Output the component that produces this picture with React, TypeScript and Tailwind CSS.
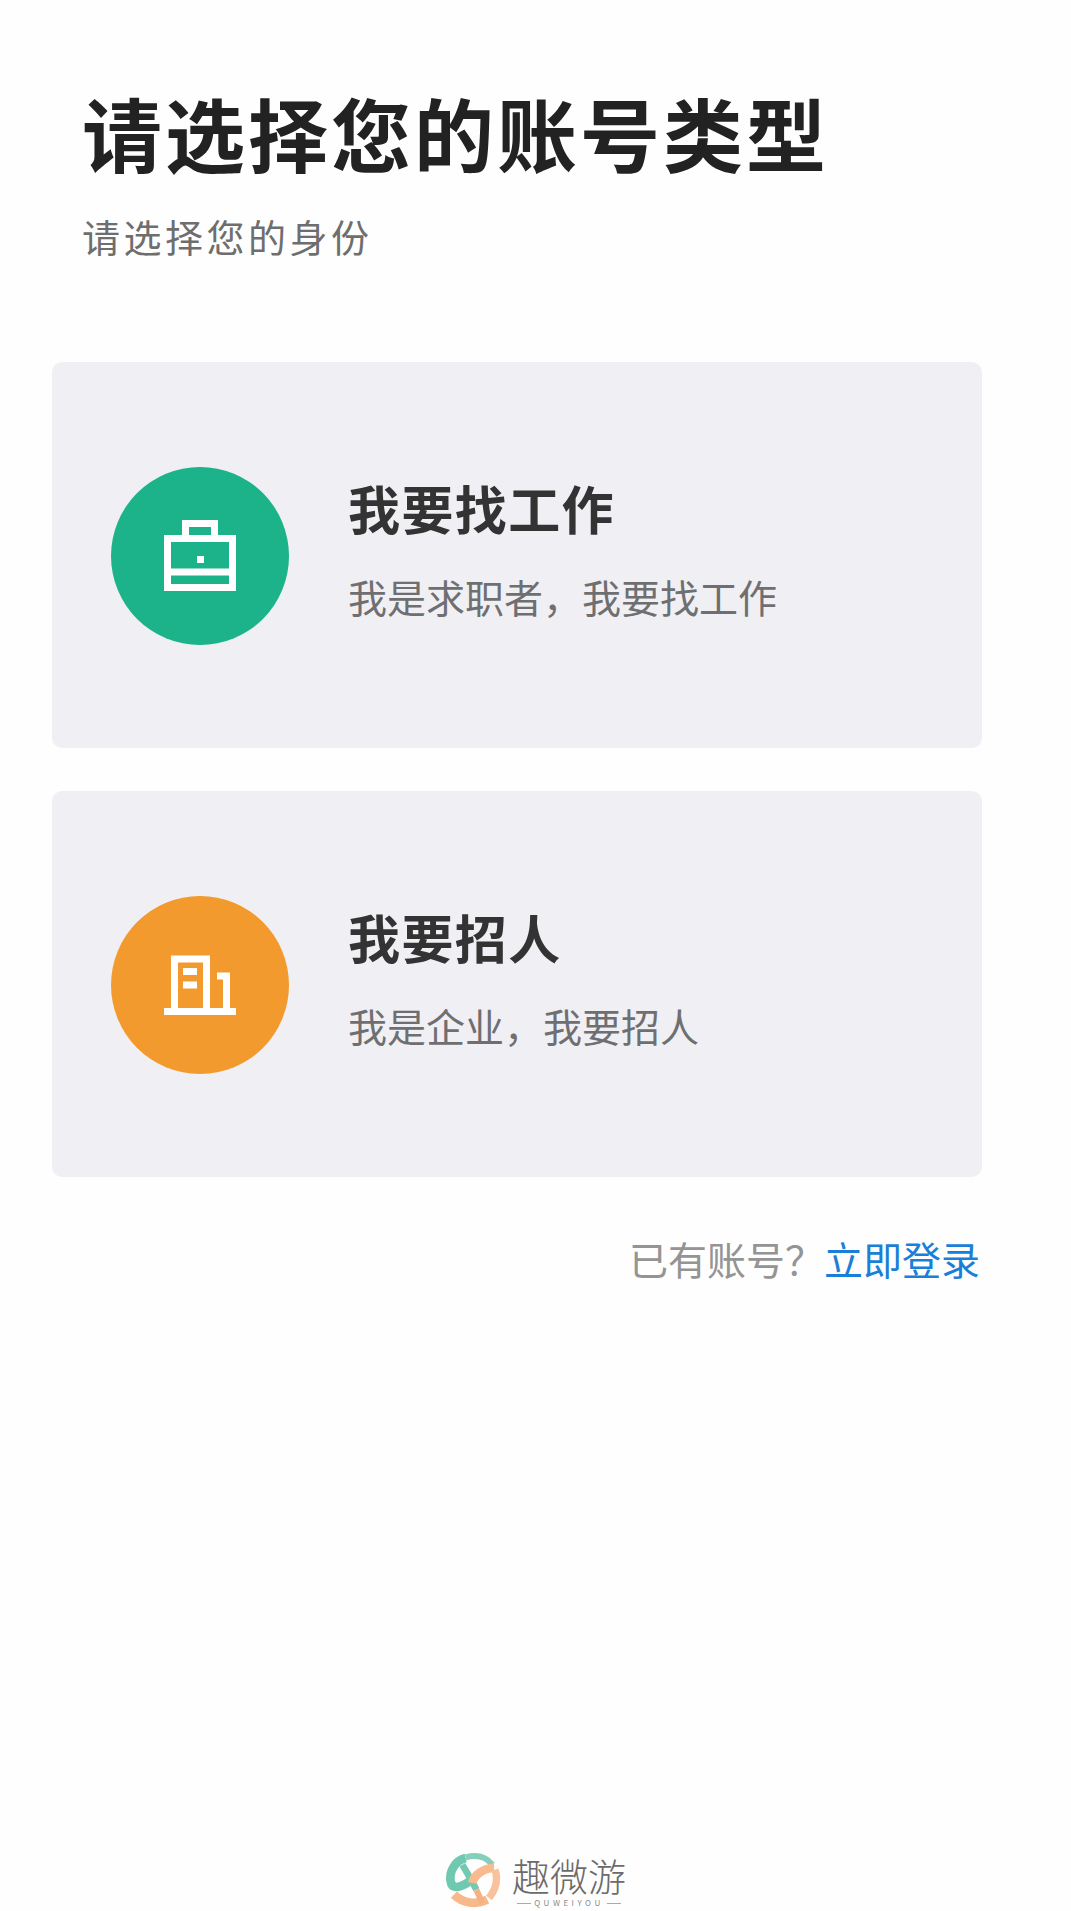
const cjk = "font-['Noto_Sans_CJK_SC','Noto_Sans',sans-serif]"

function BriefcaseIcon() {
  return (
    <svg width="72" height="72" viewBox="0 0 72 72" fill="none" stroke="#fff" strokeWidth="7">
      <path d="M21.500 18V3.500H50.500V18" />
      <rect x="3.500" y="18.500" width="65" height="49" />
      <path d="M3.500 52H68.500" />
      <rect x="33" y="36" width="7" height="7" fill="#fff" stroke="none" />
    </svg>
  )
}

function BuildingIcon() {
  return (
    <svg width="72" height="72" viewBox="0 0 72 72" fill="none" stroke="#fff" strokeWidth="7">
      <path d="M0 62.500H72" />
      <path d="M10.500 62V10H42.500V62" />
      <path d="M19 22.500H33M19 36H33" />
      <path d="M53 27H62.500V62" />
    </svg>
  )
}

// woven ring logo, traced by eye from the reference
function LogoMark() {
  return (
    <svg width="62" height="60" viewBox="0 0 186 180" fill="none">
      <path d="M80 30C48 38 30 70 35 100C38 125 62 120 92 100" stroke="#6fc8b0" strokeWidth="26" />
      <path d="M80 28C110 20 140 25 160 50" stroke="#86d0bb" strokeWidth="18" />
      <path d="M70 50C85 75 100 100 112 125" stroke="#74c9b2" strokeWidth="20" />
      <path d="M100 105C105 80 135 60 165 60" stroke="#f7bb8f" strokeWidth="26" />
      <path d="M168 65C178 95 170 125 150 150" stroke="#f8c39c" strokeWidth="22" />
      <path d="M45 140C70 165 110 172 145 155" stroke="#f7b98c" strokeWidth="26" />
      <path d="M112 125L130 165" stroke="#f5b083" strokeWidth="18" />
    </svg>
  )
}

function RoleCard({
  title,
  desc,
  color,
  icon,
}: {
  title: string
  desc: string
  color: string
  icon: React.ReactNode
}) {
  return (
    <div className="flex h-[386px] items-center rounded-[10px] bg-[#f0f0f4] pl-[59px]">
      <div className={`mt-[2px] flex h-[178px] w-[178px] shrink-0 items-center justify-center rounded-full ${color}`}>
        {icon}
      </div>
      <div className="ml-[59px] flex flex-col pb-[13px]">
        <div className="text-[52px] leading-[64px] font-bold tracking-[1.4px] text-[#333333]">{title}</div>
        <div className="mt-[31px] text-[39px] leading-[50px] text-[#6f6f72]">{desc}</div>
      </div>
    </div>
  )
}

export default function App() {
  return (
    <div className={`${cjk} flex min-h-[1911px] flex-col bg-[#fefefe]`}>
      <div className="pt-[76px] pl-[82px]">
        <h1 className="text-[80px] leading-[110px] font-bold tracking-[3px] text-[#222222]">请选择您的账号类型</h1>
        <p className="mt-[25px] text-[38px] leading-[50px] tracking-[3.500px] text-[#6e6e6e]">请选择您的身份</p>
      </div>

      <div className="mt-[101px] ml-[52px] flex w-[930px] flex-col gap-[43px] self-start">
        <RoleCard
          title="我要找工作"
          desc={"我是求职者\uFF0C我要找工作"}
          color="bg-[#1cb28a]"
          icon={<BriefcaseIcon />}
        />
        <RoleCard
          title="我要招人"
          desc={"我是企业\uFF0C我要招人"}
          color="bg-[#f29a2e]"
          icon={<BuildingIcon />}
        />
      </div>

      <div className="mt-[56px] ml-[52px] w-[928px] text-right text-[39px] leading-[50px] text-[#949494]">
        {"已有账号\uFF1F"}<span className="text-[#1a7fd8]">立即登录</span>
      </div>

      <div className="mt-auto mb-[3px] flex items-center justify-center pr-[6px]">
        <LogoMark />
        <div className="ml-[11px] flex flex-col items-center pt-[4px]">
          <div className="text-[38px] leading-[46px] font-light text-[#6b6b6b]">趣微游</div>
          <div className="flex items-center gap-[3px] text-[8px] leading-[10px] tracking-[3.500px] text-[#8a8a8a]">
            <span className="h-px w-[14px] bg-[#aaaaaa]" />
            QUWEIYOU
            <span className="h-px w-[14px] bg-[#aaaaaa]" />
          </div>
        </div>
      </div>
    </div>
  )
}
